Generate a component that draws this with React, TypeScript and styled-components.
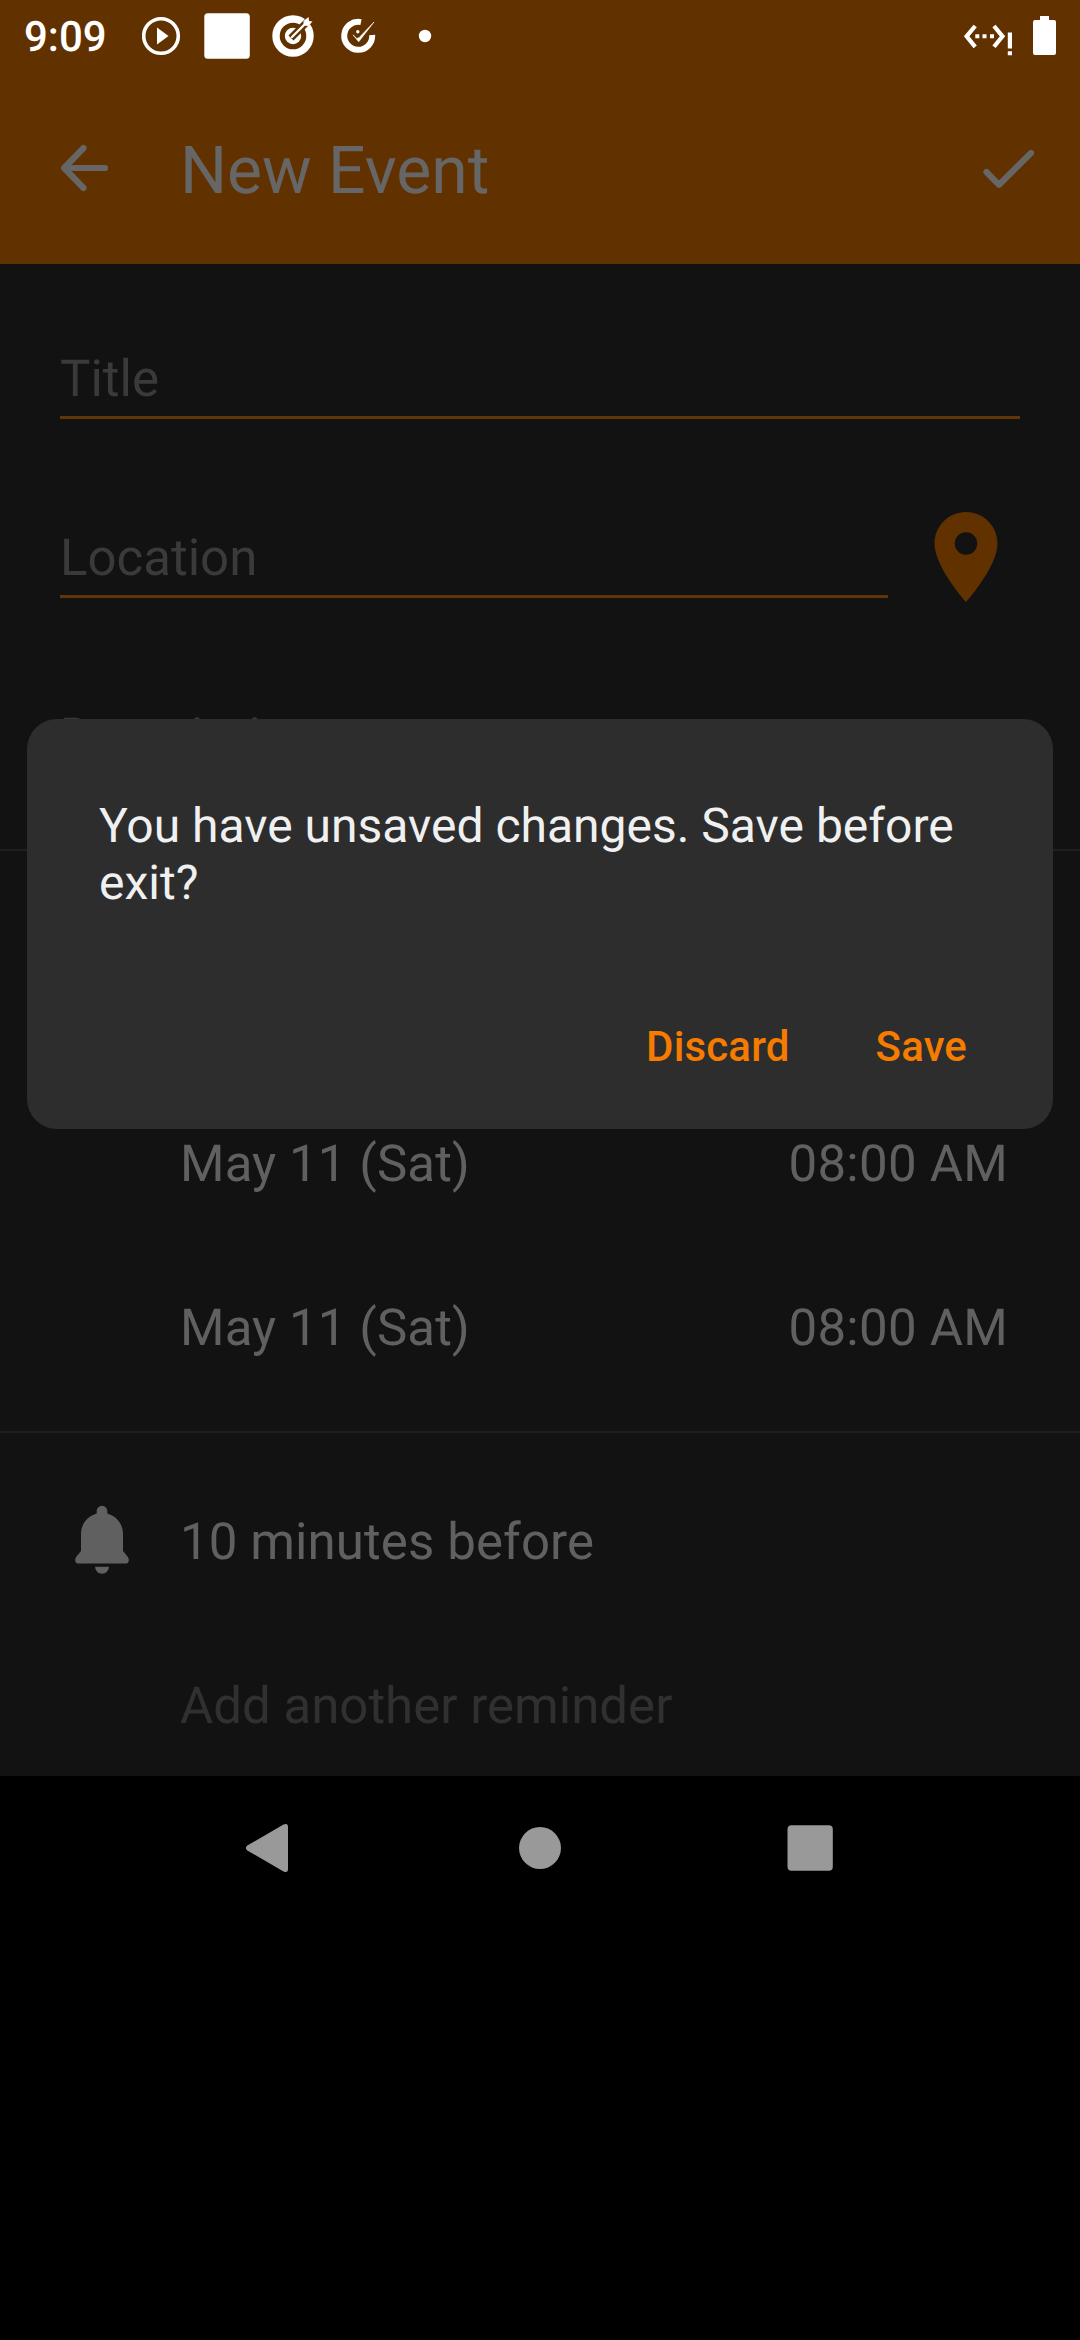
import React from "react";
import styled, { createGlobalStyle } from "styled-components";

const GlobalStyle = createGlobalStyle`
  * { box-sizing: border-box; }
  body {
    margin: 0;
    background: #000;
    font-family: Roboto, "Noto Sans", sans-serif;
    text-rendering: geometricPrecision;
  }
`;

const Screen = styled.div`
  position: relative;
  display: flex;
  flex-direction: column;
  width: 1080px;
  height: 2340px;
  background: #000;
  overflow: hidden;
`;

const Header = styled.header`
  height: 264px;
  background: #623100;
`;

const StatusBar = styled.div`
  display: flex;
  justify-content: space-between;
  height: 72px;
  color: #fff;
`;

const StatusGroup = styled.div`
  display: flex;
  align-items: center;
`;

const Clock = styled.span`
  width: 142px;
  padding: 3px 0 0 24px;
  font-size: 42px;
  font-weight: 500;
  line-height: 50px;
`;

const Toolbar = styled.div`
  display: flex;
  align-items: center;
  height: 192px;
  padding: 0 36px 0 52px;
  color: #666;
`;

const ToolbarTitle = styled.h1`
  flex: 1;
  margin: 0 0 0 64px;
  padding-top: 8px;
  font-size: 66px;
  font-weight: 400;
  line-height: 78px;
`;

const ToolbarIcon = styled.svg`
  display: block;
  fill: none;
  stroke: #666;
  stroke-width: 6.2;
  stroke-linecap: round;
  stroke-linejoin: round;
`;

const Form = styled.main`
  display: flex;
  flex-direction: column;
  height: 1512px;
  background: #121212;
  font-size: 51px;
  line-height: 60px;
`;

const FieldRow = styled.div`
  display: flex;
  align-items: flex-end;
  height: 179px;
  padding: 0 60px;

  &:first-child {
    height: 155px;
  }
`;

const Field = styled.div`
  flex: 1;
  height: 69px;
  border-bottom: 3px solid #623508;
  color: #3a3a3a;
`;

const PinIcon = styled.svg`
  display: block;
  margin-left: 24px;
  margin-bottom: -13px;
  fill: #623100;
`;

const Fields = styled.section`
  flex: none;
  height: 585px;
`;

const Times = styled.section`
  flex: none;
  height: 582px;
  padding-top: 232px;
  border-top: 2px solid #1f1f1f;
`;

const Reminders = styled.section`
  flex: none;
  height: 345px;
  padding-top: 28px;
  border-top: 2px solid #1f1f1f;
  overflow: hidden;
`;

const Row = styled.div<{ $faint?: boolean }>`
  display: flex;
  align-items: center;
  justify-content: space-between;
  height: 164px;
  padding-left: 180px;
  padding-right: 72px;
  color: ${(p) => (p.$faint ? "#303030" : "#606060")};
`;

const DateText = styled.span`
  letter-spacing: 0.1px;
`;

const TimeText = styled.span`
  letter-spacing: 0.25px;
`;

const ReminderRow = styled(Row)`
  justify-content: flex-start;
  padding-left: 72px;
`;

const BellIcon = styled.svg`
  display: block;
  width: 60px;
  height: 78px;
  margin-right: 48px;
  fill: #606060;
`;

const NavBar = styled.nav`
  display: flex;
  justify-content: space-around;
  align-items: center;
  height: 144px;
  padding: 0 135px;
  background: #000;
`;

const NavIcon = styled.svg`
  display: block;
  width: 60px;
  height: 60px;
  fill: #999;
`;

const Dialog = styled.div`
  position: absolute;
  top: 719px;
  left: 27px;
  display: flex;
  flex-direction: column;
  justify-content: space-between;
  width: 1026px;
  height: 410px;
  padding: 78px 72px 52px;
  border-radius: 30px;
  background: #2d2d2d;
`;

const Message = styled.p`
  margin: 0;
  color: #f0f0f0;
  font-size: 48px;
  line-height: 57px;
`;

const Actions = styled.div`
  display: flex;
  justify-content: flex-end;
  gap: 86px;
  padding-right: 14px;
`;

const Action = styled.button`
  padding: 0;
  border: 0;
  background: none;
  color: #f57c00;
  font: 500 42px/60px Roboto, sans-serif;
  letter-spacing: 0.15px;
`;

function NotificationIcons() {
  return (
    <svg width="300" height="72" viewBox="142 0 300 72" fill="#fff">
      <circle cx="161" cy="36" r="17.3" fill="none" stroke="#fff" strokeWidth="3.6" />
      <path d="M157 27.6v16.8L168.5 36z" />
      <rect x="204.300" y="13.200" width="45.500" height="45.600" rx="3.500" />
      <circle cx="293" cy="36" r="17" fill="none" stroke="#fff" strokeWidth="7.4" />
      <circle cx="293" cy="36" r="8.2" />
      <path d="M291 38L311 18" stroke="#623100" strokeWidth="7" />
      <path d="M292 37L307 22" stroke="#fff" strokeWidth="2.4" strokeLinecap="round" />
      <path d="M303.500 25.500v-4.500l5-4 .6 4 3.400.5-4.200 4.600z" />
      <path d="M361 22.100A14 14 0 1 0 372.200 35" fill="none" stroke="#fff" strokeWidth="6" />
      <path d="M353 34.800l5.700 7 15.300-19.800-15 15.700-2.200.8z" stroke="#fff" strokeWidth="0.600" />
      <circle cx="357.800" cy="31.800" r="1.700" />
      <circle cx="425" cy="36" r="6.200" />
    </svg>
  );
}

function SystemIcons() {
  return (
    <svg width="130" height="72" viewBox="950 0 130 72" fill="#fff">
      <path
        d="M975.200 26L966.600 36.300L975.200 46.800M994 26L1002.500 36.300L994 46.800"
        fill="none"
        stroke="#fff"
        strokeWidth="4.200"
      />
      <path d="M975.300 34.300h4v4h-4zM982.500 34.300h4v4h-4zM990 34.300h4v4h-4z" />
      <path d="M1007.800 32.400h4.200v16h-4.200zM1007.800 51.300h4.200v4h-4.200z" />
      <path d="M1040 16h9v4h5a2 2 0 0 1 2 2v31a2 2 0 0 1-2 2h-19a2 2 0 0 1-2-2V22a2 2 0 0 1 2-2h5z" />
    </svg>
  );
}

export default function App() {
  return (
    <Screen>
      <GlobalStyle />
      <Header>
        <StatusBar>
          <StatusGroup>
            <Clock>9:09</Clock>
            <NotificationIcons />
          </StatusGroup>
          <StatusGroup>
            <SystemIcons />
          </StatusGroup>
        </StatusBar>
        <Toolbar>
          <ToolbarIcon width="64" height="64" viewBox="52 136 64 64">
            <path d="M105 168H64.500M83.500 148L64.200 168L83.500 188" />
          </ToolbarIcon>
          <ToolbarTitle>New Event</ToolbarTitle>
          <ToolbarIcon width="72" height="64" viewBox="972 136 72 64">
            <path d="M986.500 172L999 184.800L1031 153" />
          </ToolbarIcon>
        </Toolbar>
      </Header>

      <Form>
        <Fields>
          <FieldRow>
            <Field>Title</Field>
          </FieldRow>
          <FieldRow>
            <Field>Location</Field>
            <PinIcon width="108" height="108" viewBox="0 0 24 24">
              <path d="M12 2C8.130 2 5 5.130 5 9c0 5.250 7 13 7 13s7-7.750 7-13c0-3.870-3.130-7-7-7zm0 9.500a2.500 2.500 0 0 1 0-5 2.500 2.500 0 0 1 0 5z" />
            </PinIcon>
          </FieldRow>
          <FieldRow>
            <Field>Description</Field>
          </FieldRow>
        </Fields>
        <Times>
          <Row>
            <DateText>May 11 (Sat)</DateText>
            <TimeText>08:00 AM</TimeText>
          </Row>
          <Row>
            <DateText>May 11 (Sat)</DateText>
            <TimeText>08:00 AM</TimeText>
          </Row>
        </Times>
        <Reminders>
          <ReminderRow>
            <BellIcon viewBox="72 1504 60 78">
              <path d="M96.700 1511a5.300 5.300 0 0 1 10.600 0v2.600C117 1516.500 123 1524.500 123 1534v17l4.500 5.500c2.500 3.500 1 7-1.500 7H78c-2.500 0-4-3.500-1.500-7L81 1551v-17c0-9.500 6-17.500 15.700-20.400z" />
              <path d="M95 1566.800h14a7 7 0 0 1-14 0z" />
            </BellIcon>
            <DateText>10 minutes before</DateText>
          </ReminderRow>
          <Row $faint>
            <span>Add another reminder</span>
          </Row>
        </Reminders>
      </Form>

      <NavBar>
        <NavIcon viewBox="0 0 60 60">
          <path d="M7.300 27.600L43.500 6.600Q48 4.500 48 9v42q0 4.500-4.500 2.400L7.300 32.400q-3-2.400 0-4.800z" />
        </NavIcon>
        <NavIcon viewBox="0 0 60 60">
          <circle cx="30" cy="30" r="21" />
        </NavIcon>
        <NavIcon viewBox="0 0 60 60">
          <rect x="7.500" y="7.200" width="45.300" height="45.500" rx="4" />
        </NavIcon>
      </NavBar>

      <Dialog role="dialog">
        <Message>You have unsaved changes. Save before exit?</Message>
        <Actions>
          <Action>Discard</Action>
          <Action>Save</Action>
        </Actions>
      </Dialog>
    </Screen>
  );
}
